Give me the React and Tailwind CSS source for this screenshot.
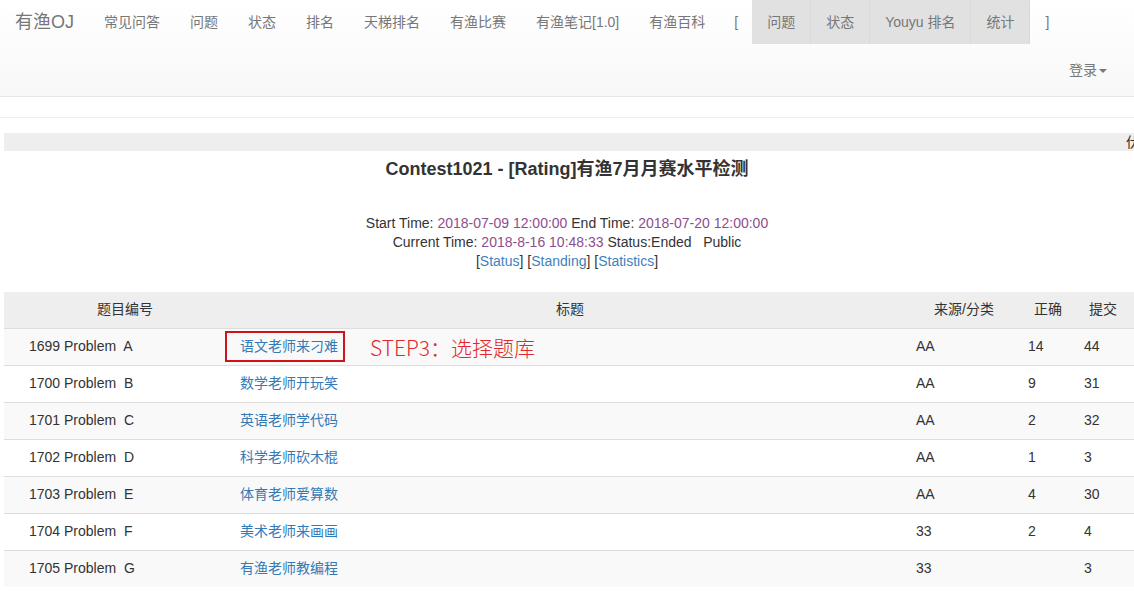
import React from "react";

const font = { fontFamily: '"Liberation Sans", Arial, "Noto Sans CJK SC", sans-serif' };

const navLinks = ["常见问答", "问题", "状态", "排名", "天梯排名", "有渔比赛", "有渔笔记[1.0]", "有渔百科"];
const contestLinks = ["问题", "状态", "Youyu 排名", "统计"];

const problems = [
  { id: "1699 Problem  A", title: "语文老师来刁难", src: "AA", ac: "14", sub: "44" },
  { id: "1700 Problem  B", title: "数学老师开玩笑", src: "AA", ac: "9", sub: "31" },
  { id: "1701 Problem  C", title: "英语老师学代码", src: "AA", ac: "2", sub: "32" },
  { id: "1702 Problem  D", title: "科学老师砍木棍", src: "AA", ac: "1", sub: "3" },
  { id: "1703 Problem  E", title: "体育老师爱算数", src: "AA", ac: "4", sub: "30" },
  { id: "1704 Problem  F", title: "美术老师来画画", src: "33", ac: "2", sub: "4" },
  { id: "1705 Problem  G", title: "有渔老师教编程", src: "33", ac: "", sub: "3" },
];

export default function App() {
  return (
    <div className="min-h-screen bg-white text-[#333] text-[14px] overflow-hidden" style={font}>
      {/* navbar */}
      <nav className="h-[97px] border-b border-[#e7e7e7] bg-gradient-to-b from-white to-[#f8f8f8]">
        <div className="h-[44px] flex items-stretch text-[#777]">
          <span className="flex items-center px-[15px] text-[18px]">有渔OJ</span>
          {navLinks.map((l) => (
            <span key={l} className="flex items-center px-[15px]">{l}</span>
          ))}
          <span className="flex items-center pl-[14px] pr-[14px]">[</span>
          {contestLinks.map((l) => (
            <span key={l} className="flex items-center px-[15px] bg-[#e1e1e1] border-r border-[#d9d9d9]">{l}</span>
          ))}
          <span className="flex items-center pl-[15px]">]</span>
        </div>
        <div className="h-[52px] flex items-center justify-end pr-[27px] text-[#777]">
          <span>登录</span>
          <span className="ml-[2px] mt-[1px] w-0 h-0 border-l-[4px] border-r-[4px] border-t-[4px] border-l-transparent border-r-transparent border-t-[#777]" />
        </div>
      </nav>
      <div className="h-[21px] border-b border-[#eee]" />

      {/* marquee bar */}
      <div className="ml-[4px] mt-[15px] h-[18px] bg-[#eee] overflow-hidden whitespace-nowrap pl-[1122px] leading-[18px]">
        伏羲
      </div>

      <h3 className="mt-[7px] text-center text-[18px] leading-[22px] font-bold">
        Contest1021 - [Rating]有渔7月月赛水平检测
      </h3>

      <div className="mt-[34px] text-center leading-[19px]">
        <div>
          Start Time: <span className="text-[#8e4d8e]">2018-07-09 12:00:00</span> End Time:{" "}
          <span className="text-[#8e4d8e]">2018-07-20 12:00:00</span>
        </div>
        <div className="whitespace-pre">
          Current Time: <span className="text-[#8e4d8e]">2018-8-16 10:48:33</span> Status:Ended   Public
        </div>
        <div>
          [<a className="text-[#3f7fbd]">Status</a>] [<a className="text-[#3f7fbd]">Standing</a>] [
          <a className="text-[#3f7fbd]">Statistics</a>]
        </div>
      </div>

      {/* problem table */}
      <table className="ml-[4px] mt-[21px] w-[1130px] table-fixed border-collapse">
        <colgroup>
          <col className="w-[228px]" />
          <col className="w-[676px]" />
          <col className="w-[112px]" />
          <col className="w-[56px]" />
          <col className="w-[58px]" />
        </colgroup>
        <thead>
          <tr className="h-[36px] bg-[#eee] font-normal">
            <th className="font-normal text-center pl-[14px]">题目编号</th>
            <th className="font-normal text-center">标题</th>
            <th className="font-normal text-center">来源/分类</th>
            <th className="font-normal text-center">正确</th>
            <th className="font-normal text-center pr-[4px]">提交</th>
          </tr>
        </thead>
        <tbody>
          {problems.map((p, i) => (
            <tr key={p.id} className={`h-[37px] border-t border-[#ddd] ${i % 2 === 0 ? "bg-[#f9f9f9]" : "bg-white"}`}>
              <td className="pl-[25px] whitespace-pre">{p.id}</td>
              <td className="pl-[8px] relative">
                <a className="text-[#337ab7]">{p.title}</a>
                {i === 0 && (
                  <>
                    <span className="absolute left-[-7px] top-[2px] w-[120px] h-[31px] border-2 border-[#d0121b]" />
                    <span
                      className="absolute left-[138px] top-[4px] text-[21px] leading-[28px] font-light text-[#e0282e] whitespace-pre"
                      style={{ fontFamily: '"Noto Sans CJK SC", sans-serif' }}
                    >
                      STEP3：选择题库
                    </span>
                  </>
                )}
              </td>
              <td className="pl-[8px]">{p.src}</td>
              <td className="pl-[8px]">{p.ac}</td>
              <td className="pl-[8px]">{p.sub}</td>
            </tr>
          ))}
        </tbody>
      </table>
    </div>
  );
}
